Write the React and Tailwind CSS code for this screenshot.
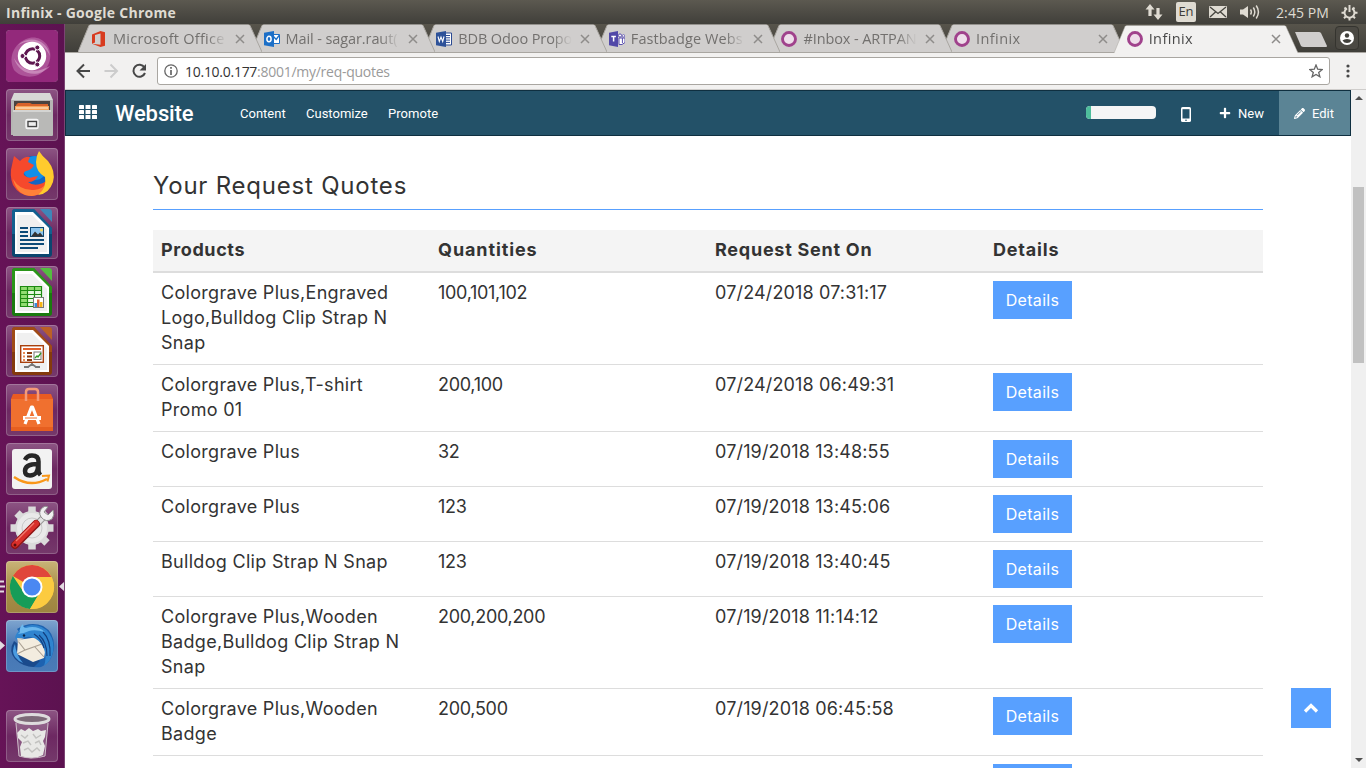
import React from "react";
import { FaPlus } from "react-icons/fa";
import { FaPencil } from "react-icons/fa6";

const ui = "font-['Open_Sans','Noto_Sans',sans-serif]";

function TabIcon({ kind }) {
  if (kind === "office")
    return (
      <svg width="16" height="16" viewBox="0 0 16 16">
        <path d="M1 3.5 9.5 0 14 1.3v13.4L9.5 16 1 12.7l8.5 1.1V2.6L4 4v7.6L1 12.7z" fill="#d83b1f" />
      </svg>
    );
  if (kind === "outlook")
    return (
      <svg width="16" height="16" viewBox="0 0 16 16">
        <path d="M8 3.5h7.5v9H8z" fill="#fff" stroke="#1c6fc7" />
        <path d="M9 5l3.2 3.5L15.5 4" fill="none" stroke="#1c6fc7" strokeWidth="1.4" />
        <path d="M0 1.8 10 0v16L0 14.2z" fill="#1c6fc7" />
        <ellipse cx="5" cy="8" rx="2.1" ry="2.7" fill="none" stroke="#fff" strokeWidth="1.5" />
      </svg>
    );
  if (kind === "word")
    return (
      <svg width="16" height="16" viewBox="0 0 16 16">
        <path d="M8 2h7.5v12H8z" fill="#fff" stroke="#2b4a92" />
        <path d="M9 4.5h5M9 6.8h5M9 9.1h5M9 11.4h5" stroke="#2b4a92" />
        <path d="M0 1.8 10 0v16L0 14.2z" fill="#2e5299" />
        <path d="M2 5.5l1.3 5L5 6l1.7 4.5L8 5.5" fill="none" stroke="#fff" strokeWidth="1.1" />
      </svg>
    );
  if (kind === "teams")
    return (
      <svg width="16" height="16" viewBox="0 0 16 16">
        <circle cx="11" cy="4.5" r="1.6" fill="#fff" stroke="#5b50b0" />
        <circle cx="14.5" cy="4.8" r="1.2" fill="#fff" stroke="#5b50b0" strokeWidth=".8" />
        <path d="M10 7h6v4.5l-3 2h-3z" fill="#fff" stroke="#5b50b0" />
        <path d="M13.4 7v5" stroke="#5b50b0" />
        <path d="M0 1.8 9 0v16L0 14.2z" fill="#5148a8" />
        <path d="M2.3 5.6h4.6M4.6 5.6v5" stroke="#fff" strokeWidth="1.5" />
      </svg>
    );
  return (
    <svg width="16" height="16" viewBox="0 0 16 16">
      <circle cx="8" cy="8" r="6.5" fill="#eedeea" stroke="#a0428c" strokeWidth="2.9" />
    </svg>
  );
}

function Tab({ kind, title, active, track }) {
  return (
    <div className="relative -mr-[11.4px] h-[28px] w-[184px] shrink-0">
      <svg className="absolute inset-0" width="184" height="28" viewBox="0 0 184 28">
        <path d="M0 28 L11 1.5 Q11.5 .5 13 .5 H170 Q171.5 .5 172 1.5 L184 28z" fill={active ? "#f2f1f0" : "#d0cecd"} />
        <path d="M0 28 L11 1.5 M172 1.5 L184 28" fill="none" stroke="#a9a6a1" strokeWidth={active ? 0.5 : 1} />
      </svg>
      <div className={"relative flex h-full items-center pl-[13px] " + (active ? "" : "pt-[2px]")}>
        <TabIcon kind={kind} />
        <span
          className={
            "ml-[6px] w-[115px] text-[14.5px] leading-[20px] whitespace-nowrap [mask-image:linear-gradient(to_right,black_82%,transparent_99%)] " +
            track + " " +
            (active ? "text-[#4a4a4a]" : "text-[#72706e]")
          }
        >
          {title}
        </span>
        <svg className="ml-[7px]" width="10" height="10" viewBox="0 0 10 10">
          <path d="M1 1l8 8M9 1L1 9" stroke="#8e8c8a" strokeWidth="1.5" />
        </svg>
      </div>
    </div>
  );
}

const tabs = [
  ["office", "Microsoft Office", "z-[7]", "tracking-[0.25px]"],
  ["outlook", "Mail - sagar.raut(", "z-[6]", "tracking-[-0.1px]"],
  ["word", "BDB Odoo Propo", "z-[5]", "tracking-[-0.1px]"],
  ["teams", "Fastbadge Webs", "z-[4]", "tracking-[0.1px]"],
  ["ring", "#Inbox - ARTPAN", "z-[3]", "tracking-[-0.1px]"],
  ["ring", "Infinix", "z-[2]", "tracking-[0.4px]"],
  ["ring", "Infinix", "z-[8]", "tracking-[0.4px]"],
];

function SystemBar() {
  return (
    <div className={"flex h-[24px] shrink-0 items-center bg-linear-to-b from-[#5c5950] to-[#403f3a] text-[#dfdbd2] " + ui}>
      <div className="pl-[6px] text-[14px] font-bold tracking-[0.28px]">Infinix - Google Chrome</div>
      <div className="ml-auto flex items-center">
        <svg width="18" height="18" viewBox="0 0 18 18" fill="#dfdbd2">
          <path d="M5 1 9.5 6.5H6.6V13H3.4V6.500H.5zM13 17 8.500 11.500h2.900V5h3.200v6.500h2.900z" />
        </svg>
        <div className="ml-[13px] flex h-[20px] w-[20px] items-center justify-center rounded-[2px] bg-[#dfdbd2] text-[13px] text-[#3d3c38]">En</div>
        <svg className="ml-[13px]" width="18" height="12" viewBox="0 0 18 12">
          <rect width="18" height="12" rx="1" fill="#dfdbd2" />
          <path d="M1 1l8 6.500L17 1M1 11l5.500-5M17 11l-5.500-5" fill="none" stroke="#45443e" strokeWidth="1.3" />
        </svg>
        <svg className="ml-[13px]" width="21" height="16" viewBox="0 0 21 16">
          <path d="M0 5.500h3L8 2v12l-5-3.500H0z" fill="#dfdbd2" />
          <path d="M10.500 5.500q1.700 2.500 0 5M13.300 3.500q3 4.500 0 9M16.200 1.500q4.500 6.500 0 13" fill="none" stroke="#dfdbd2" strokeWidth="1.5" />
        </svg>
        <div className="ml-[15px] w-[53px] text-[14px] whitespace-nowrap tracking-[0.1px]">2:45 PM</div>
        <svg className="mr-[8px] ml-[12px]" width="17" height="17" viewBox="0 0 17 17" fill="none" stroke="#dfdbd2">
          <path d="M6 4.300a5 5 0 1 0 5 0" strokeWidth="2" />
          <path d="M8.500 1v7" strokeWidth="2" />
          <path d="M3.500 3.500l1.500 1.500M13.500 3.500l-1.500 1.500M.5 8.700h2.500M14 8.700h2.500M3 14.200l1.700-1.700M14 14.200l-1.700-1.700M8.500 14v2.500" strokeWidth="2" />
        </svg>
      </div>
    </div>
  );
}

function Doc({ dark, mid, light, children }) {
  return (
    <>
      <path d="M7 2h21l18 19v26q0 3-3 3H9q-3 0-3-3V5q0-3 3-3z" fill={dark} />
      <path d="M6 5q0-3 3-3h19l18 19v6H6z" fill={mid} opacity=".55" />
      <path d="M9 5h18l16 16v26H9z" fill="#fff" />
      <path d="M11 8h15l15 15v22H11z" fill="#f0f0f0" />
      <path d="M34 2h9q3 0 3 3v10z" fill={light} />
      {children}
    </>
  );
}

const launcher = {
  ubuntu: (
    <>
      <rect width="52" height="52" rx="4" fill="#93297b" />
      <path d="M8 40C-2 20 20 2 34 9c16 8 12 30-2 36-10 4-20 0-24-5z" fill="#c77fb8" opacity=".5" />
      <path d="M12 15C24 4 42 10 44 26 38 12 24 8 12 15zM44 36C32 50 12 44 8 28 16 42 30 44 44 36z" fill="#e9c5e0" opacity=".45" />
      <circle cx="26" cy="26" r="14.200" fill="#fff" />
      <circle cx="26.500" cy="26" r="7.200" fill="none" stroke="#5e1750" strokeWidth="3" />
      <path d="M17 26h6M31 18l-3 5M31 34l-3-5" stroke="#fff" strokeWidth="1.300" />
      <g fill="#5e1750" stroke="#fff" strokeWidth="1">
        <circle cx="16.500" cy="26" r="2.500" /><circle cx="31.300" cy="17.500" r="2.500" /><circle cx="31.300" cy="34.500" r="2.500" />
      </g>
    </>
  ),
  files: (
    <>
      <path d="M8 4h36l3 7v10H5V11z" fill="#d8d8d6" />
      <path d="M5 11h42v35H5z" fill="#b6b6b4" />
      <path d="M8 12h36v12H8z" fill="#4a4340" />
      <path d="M10 16l2-2h12l2 1h16v9H10z" fill="#d8622a" />
      <path d="M9 17h34v6H9z" fill="#f6a35a" /><path d="M10 18.500h32v1H10z" fill="#fff3de" />
      <path d="M7 21h38l2 1v24q0 1-1 1H7z" fill="#b9b9b7" />
      <path d="M7 21h38v2H7z" fill="#d4d4d2" />
      <rect x="20" y="30.500" width="12" height="9" rx="1.500" fill="#ddd" stroke="#f5f5f5" strokeWidth="1.500" />
      <rect x="22" y="32.500" width="8.500" height="5" fill="#eee" stroke="#444" strokeWidth="1.300" />
    </>
  ),
  firefox: (
    <>
      <circle cx="27" cy="26" r="18" fill="#1265c4" />
      <circle cx="29" cy="20" r="12" fill="#118fe8" />
      <path d="M8 8l6 5q5-5 10-4l-2 5 6 3q-2 5-8 6-3 1-2 4 4 4 9 2l5-1q-3 6-10 6 6 5 15 1l6-4q-3 14-16 17Q14 49 7 37 3 27 6 17z" fill="#f6492c" />
      <path d="M7 31q7 12 21 11 9-1 14-8-3 13-16 14Q11 48 7 31z" fill="#ff8139" />
      <path d="M33 3q3 5 9 10 8 10 5 21-4 12-15 13 9-7 7-18-9-5-9-15 0-6 3-11z" fill="#ffcb2d" />
    </>
  ),
  writer: (
    <Doc dark="#0b466f" mid="#1c76ab" light="#3f86b8">
      <path d="M14 21h8M14 25h8M14 29h8M14 33h24M14 37h24M14 41h18" stroke="#0c4a77" strokeWidth="2" />
      <rect x="24.500" y="20.500" width="13" height="9" fill="#8ec6ef" stroke="#0c4a77" />
      <path d="M25 29.500l4-5 3 3 2-2 3.500 4z" fill="#333" /><circle cx="35.500" cy="23" r="1.500" fill="#f7d85c" />
    </Doc>
  ),
  calc: (
    <Doc dark="#1a7a0f" mid="#38ab22" light="#54bd40">
      <rect x="14" y="20" width="22" height="21" fill="#e6f7de" />
      <path d="M14 20h22v4H14zM14 24h7v17h-7z" fill="#92dc72" />
      <path d="M14.500 20.500h21v20h-21zM14 24.500h22M14 28.500h22M14 32.500h22M14 36.500h22M21.500 20v21M28.500 20v21" fill="none" stroke="#1d8a12" strokeWidth="1.200" />
      <rect x="27.500" y="31.500" width="10" height="10" fill="#fff" stroke="#777" />
      <path d="M28.500 37h2.500v4h-2.500z" fill="#3b8bd8" /><path d="M31 33.500h2.500V41H31z" fill="#e2602a" /><path d="M34 36h2.500v5H34z" fill="#f5b515" />
    </Doc>
  ),
  impress: (
    <Doc dark="#843a0d" mid="#b85a20" light="#bb6026">
      <rect x="14.700" y="20.700" width="22.600" height="16.600" fill="#fff" stroke="#a8400d" strokeWidth="1.400" />
      <path d="M17 24h18" stroke="#e2602a" strokeWidth="2" />
      <path d="M17 28h2M17 31.500h2M17 35h2" stroke="#e98a52" strokeWidth="2" /><path d="M21 28h5M21 31.500h5M21 35h5" stroke="#8d3c10" strokeWidth="1.800" />
      <rect x="28" y="27" width="7" height="7.500" fill="#fff" stroke="#777" /><path d="M29 33l2-2 1 1 3-4" fill="none" stroke="#2f9b24" strokeWidth="1.300" />
      <path d="M26 38v2M22 42l4-3 4 3M18 42h5M29 42h5" fill="none" stroke="#777" strokeWidth="1.800" />
    </Doc>
  ),
  software: (
    <>
      <path d="M7 10h38l2 5v32H5V15z" fill="#e95b22" />
      <path d="M5 15h42v32H5z" fill="#f0702f" /><path d="M5 43h42v4H5z" fill="#e65f20" />
      <path d="M20 17V8q0-3 3-3h6q3 0 3 3v9" fill="none" stroke="#f59a78" strokeWidth="2.500" />
      <path d="M19 40l6.500-17h1L33 40" fill="none" stroke="#fff" strokeWidth="3.200" strokeLinejoin="round" />
      <path d="M17 32h18v4H17z" fill="#fff" /><path d="M19 34h12" stroke="#f0702f" />
    </>
  ),
  amazon: (
    <>
      <rect x="6" y="6" width="40" height="40" rx="3" fill="#f2f2f2" />
      <path d="M19 17q2-4.500 7-4.500 6.500 0 6.500 6V28q0 2 2 4M32 21c-8 0-13 1.500-13 7 0 3 2 4.500 5 4.500 5 0 8-4 8-9" fill="none" stroke="#262626" strokeWidth="4.500" />
      <path d="M8 34q16 11 33 2" fill="none" stroke="#f9971a" strokeWidth="2.500" />
      <path d="M36 33l7-.500-1.500 6" fill="none" stroke="#f9971a" strokeWidth="2" />
    </>
  ),
  settings: (
    <>
      <circle cx="26" cy="26" r="17" fill="#dadada" />
      <path d="M26 4.500v43M4.500 26h43M11 11l30 30M41 11L11 41" stroke="#dadada" strokeWidth="7.500" />
      <circle cx="26" cy="26" r="15" fill="#e9e9e9" />
      <circle cx="26" cy="26" r="10" fill="none" stroke="#c9c9c9" />
      <path d="M29 24l9-9" stroke="#999" strokeWidth="6.500" /><path d="M29 24l10-10" stroke="#e2e2e2" strokeWidth="4.500" />
      <path d="M36 6q-4 4-1 9 5 6 11 2 3-4 1-9l-5 5-4-3 4-5q-3-2-6 1z" fill="#f0f0f0" stroke="#8f8f8f" />
      <path d="M9 43L30 22" stroke="#8c1414" strokeWidth="8" strokeLinecap="round" />
      <path d="M9 42.500L30 21.500" stroke="#d92f2a" strokeWidth="6" strokeLinecap="round" />
      <path d="M10 39L28 21" stroke="#f07b70" strokeWidth="1.300" /><circle cx="9" cy="43" r="1.500" fill="#5a0d0d" />
    </>
  ),
  chrome: (
    <>
      <circle cx="26" cy="26" r="22" fill="#fcca3f" />
      <path d="M26 26L6.900 15A22 22 0 0 1 45.500 16H26z" fill="#e0463b" />
      <path d="M6.900 15A22 22 0 0 0 24 48l10-17-8-5-8.500 5z" fill="#169c58" />
      <path d="M26 16h19.500A22 22 0 0 1 24 48l10.500-17z" fill="#fccb40" />
      <circle cx="26" cy="26" r="10.500" fill="#fff" /><circle cx="26" cy="26" r="8.600" fill="#4a88f2" />
    </>
  ),
  thunderbird: (
    <>
      <path d="M11 9Q24 1 37 6q11 6 11 20-1 16-13 21-6 1-12-1 8-3 10-8z" fill="#1d62b0" />
      <path d="M8 21q-6 10 1 18 8 8 19 8l6-6z" fill="#1a4a8c" />
      <path d="M12 20l20-3 8 9-2 12-11 4-16-8z" fill="#f3ecdf" />
      <path d="M12 21l7 9 17-6M11 34l8-4M38 37l-9-10" fill="none" stroke="#aaa093" strokeWidth="1.100" />
      <path d="M12 20q-5-1-1-7 5-7 15-8 11 0 17 8 6 9 4 19-2 9-9 14 3-9 0-17-4-10-13-12-6-1-13 3z" fill="#2f84cf" />
      <path d="M14 12q-1-5 3-8 0 4 3 4 11-3 19 4-10-3-16-1-6 3-11 3z" fill="#6db9ee" />
      <path d="M33 15q8 7 8 21M37 12q8 8 7 24M28 14q8 5 10 14" fill="none" stroke="#123f80" strokeWidth="1.200" />
      <path d="M9 24q-4 7 0 13 3 4 8 6-7-8-8-19z" fill="#4a9be0" />
      <circle cx="18" cy="15.500" r="1.200" fill="#0c2547" /><path d="M11 18l6 .5-5 3.500z" fill="#dbd5c7" />
    </>
  ),
  trash: (
    <>
      <path d="M9 10h34l-4 36q-13 4-26 0z" fill="#a98aa4" opacity=".45" />
      <path d="M11 23l4-4 4 2 4-3 4 3 5-2 3 2 5-1-1 7-2 4 2 5-2 9q-11 6-22 1l-1-9 2-5-4-4z" fill="#e8e8e6" />
      <path d="M15 25l4 3 3-3M27 24l3 4 5-3M17 33l5-2 3 4M29 33l4-2 2 4M18 40l4-2 4 4 5-4 3 3" fill="none" stroke="#c2c2c0" strokeWidth="1.400" />
      <path d="M10 13l3 33q13 4 26 0l3-33" fill="none" stroke="#cdbcc9" strokeWidth="1" />
      <ellipse cx="26" cy="9" rx="17" ry="4.500" fill="#7d6a78" stroke="#dedcdd" strokeWidth="3" />
    </>
  ),
};

const plain = "from-[#8d5584] via-[#6d2862] to-[#75396b]";
const apps = [
  ["ubuntu", plain], ["files", plain], ["firefox", plain], ["writer", plain], ["calc", plain], ["impress", plain],
  ["software", plain], ["amazon", plain], ["settings", plain],
  ["chrome", "from-[#c9b478] via-[#a98f48] to-[#9d8440]"],
  ["thunderbird", "from-[#7fa5cf] via-[#4676b4] to-[#4a7cb8]"],
];

function Tile({ name, tone }) {
  return (
    <div className={"h-[52px] w-[52px] overflow-hidden rounded-[4px] bg-linear-to-b shadow-[inset_0_0_0_1px_rgba(255,255,255,0.2)] " + tone}>
      <svg width="52" height="52" viewBox="0 0 52 52">{launcher[name]}</svg>
    </div>
  );
}

function Launcher() {
  return (
    <div className="relative flex w-[65px] shrink-0 flex-col gap-[7px] border-r border-[#7b4473] bg-[#601450] bg-linear-to-r from-[#661357] to-[#5c1250] pt-[6px] pl-[6px]">
      {apps.map(([n, t]) => <Tile key={n} name={n} tone={t} />)}
      <div className="mt-[31px]"><Tile name="trash" tone={plain} /></div>
      <svg className="absolute top-[554px] left-0" width="64" height="80" viewBox="0 0 64 80">
        <path d="M0 3.500h4M0 8.500h5M0 13.500h4" stroke="#e3dbe1" strokeWidth="2" />
        <path d="M64 4v9l-5-4.500zM0 63v9l5-4.500z" fill="#e3dbe1" />
      </svg>
    </div>
  );
}

function TabStrip() {
  return (
    <div className={"flex h-[29px] shrink-0 items-end border-b border-[#a9a6a1] bg-linear-to-b from-[#57544b] to-[#403f3a] pl-[13px] " + ui}>
      {tabs.map(([k, t, z, tr], i) => (
        <div key={i} className={"relative " + z + (i === 6 ? " -mb-px" : "")}>
          <Tab kind={k} title={t} active={i === 6} track={tr} />
        </div>
      ))}
      <svg className="mb-[4px] ml-[9px] shrink-0" width="33" height="17" viewBox="0 0 33 17">
        <path d="M0 1h24q1 0 2 1l6 13q0 1-1 1H9q-2 0-3-1z" fill="#d0cecd" />
      </svg>
      <div className="mb-[2px] ml-[7px] flex h-[24px] w-[24px] shrink-0 items-center justify-center rounded-[4px] border border-[#35342f] bg-[#4b4943]">
        <svg width="14" height="14" viewBox="0 0 14 14">
          <circle cx="7" cy="7" r="7" fill="#fff" /><circle cx="7" cy="4.500" r="2.200" fill="#42413c" />
          <path d="M2.500 9.500q1.500-1.500 4.500-1.500t4.500 1.500q-1.500 2.500-4.500 2.500T2.500 9.500z" fill="#42413c" />
        </svg>
      </div>
    </div>
  );
}

function Toolbar() {
  return (
    <div className={"flex h-[37px] shrink-0 items-center border-b border-[#cfcdcb] bg-[#f2f1f0] " + ui}>
      <svg className="ml-[11px]" width="72" height="16" viewBox="0 0 72 16" fill="none" strokeWidth="2">
        <path d="M14 8H1.500M8 1.500L1.500 8 8 14.500" stroke="#474747" />
        <path d="M28.500 8H41M34.500 1.500L41 8l-6.500 6.500" stroke="#ccc" />
        <path d="M68.500 4.500A6 6 0 1 0 69 10" stroke="#474747" />
        <path d="M70 1v6.500h-6.500z" fill="#474747" />
      </svg>
      <div className="ml-[9px] flex h-[28px] w-[1173px] items-center rounded-[3px] border border-[#a9a6a1] bg-white pr-[6px] pl-[6px]">
        <svg width="14" height="14" viewBox="0 0 14 14" fill="none" stroke="#666">
          <circle cx="7" cy="7" r="6.200" strokeWidth="1.300" /><path d="M7 6v5M7 3v1.700" strokeWidth="1.700" />
        </svg>
        <div className="ml-[7px] text-[14px] tracking-[-0.27px] whitespace-nowrap text-[#9a9a9a]"><span className="text-[#333]">10.10.0.177</span>:8001/my/req-quotes</div>
        <svg className="ml-auto" width="14" height="14" viewBox="0 0 14 14">
          <path d="M7 1l1.700 4.200 4.500.3-3.500 2.900 1.200 4.400L7 10.400l-3.900 2.400 1.200-4.400L.8 5.500l4.500-.3z" fill="none" stroke="#666" strokeWidth="1.300" />
        </svg>
      </div>
      <svg className="ml-[16px]" width="4" height="14" viewBox="0 0 4 14" fill="#474747">
        <circle cx="2" cy="2" r="1.600" /><circle cx="2" cy="7" r="1.600" /><circle cx="2" cy="12" r="1.600" />
      </svg>
    </div>
  );
}

function SiteNav() {
  return (
    <div className="flex h-[46px] items-center border border-[#0f2f40] bg-[#235168] font-[Roboto,sans-serif] text-[13px] text-white">
      <svg className="mb-[2px] ml-[13px]" width="18" height="14" viewBox="0 0 18 14" fill="#fff">
        {[0, 5, 10].map((y) => [0, 6.5, 13].map((x) => <rect key={x + "-" + y} x={x} y={y} width="5" height="4" rx=".6" />))}
      </svg>
      <div className="ml-[18px] w-[80px] text-[22px] font-medium tracking-[-0.1px]">Website</div>
      <div className="mt-px ml-[45px] w-[46px]">Content</div>
      <div className="mt-px ml-[20px] w-[62px]">Customize</div>
      <div className="mt-px ml-[20px] tracking-[0.06px]">Promote</div>
      <div className="mb-px ml-auto h-[13px] w-[70px] overflow-hidden rounded-[4px] bg-[#f5f5f5]">
        <div className="h-full w-[5px] bg-[#4dbd9b]" />
      </div>
      <svg className="mt-[2px] ml-[25px]" width="10" height="15" viewBox="0 0 10 15">
        <rect width="10" height="15" rx="1.600" fill="#fff" /><rect x="1.500" y="2.200" width="7" height="9.300" fill="#235168" />
        <circle cx="5" cy="13.200" r=".8" fill="#235168" />
      </svg>
      <FaPlus className="ml-[28px] size-[12px]" />
      <div className="mt-px ml-[7px] w-[26px]">New</div>
      <div className="ml-[15px] flex h-[44px] w-[71px] items-center bg-[#5b8495] pl-[15px]">
        <FaPencil className="size-[11px]" />
        <div className="mt-px ml-[7px]">Edit</div>
      </div>
    </div>
  );
}

const rows = [
  [["Colorgrave Plus,Engraved", "Logo,Bulldog Clip Strap N", "Snap"], "100,101,102", "07/24/2018 07:31:17"],
  [["Colorgrave Plus,T-shirt", "Promo 01"], "200,100", "07/24/2018 06:49:31"],
  [["Colorgrave Plus"], "32", "07/19/2018 13:48:55"],
  [["Colorgrave Plus"], "123", "07/19/2018 13:45:06"],
  [["Bulldog Clip Strap N Snap"], "123", "07/19/2018 13:40:45"],
  [["Colorgrave Plus,Wooden", "Badge,Bulldog Clip Strap N", "Snap"], "200,200,200", "07/19/2018 11:14:12"],
  [["Colorgrave Plus,Wooden", "Badge"], "200,500", "07/19/2018 06:45:58"],
  [[""], "", ""],
];

function Quotes() {
  return (
    <div className="ml-[88px] w-[1110px] font-[Inter,sans-serif] text-[#333]">
      <h1 className="mt-[32px] h-[42px] border-b border-[#58a0ff] text-[24px] leading-[36px] tracking-[0.78px]">Your Request Quotes</h1>
      <div className="mt-[20px] grid h-[43px] grid-cols-[277px_277px_278px_278px] border-b-2 border-[#ddd] bg-[#f4f4f4] px-[8px] text-[18px] leading-[40px] font-bold">
        <div className="tracking-[0.6px]">Products</div>
        <div className="tracking-[0.9px]">Quantities</div>
        <div className="tracking-[0.75px]">Request Sent On</div>
        <div className="tracking-[0.8px]">Details</div>
      </div>
      {rows.map(([p, q, d], i) => (
        <div key={i} className={"grid grid-cols-[277px_277px_278px_278px] px-[8px] text-[18px] leading-[25px] whitespace-nowrap " + (i ? "border-t border-[#ddd]" : "")}>
          <div className="pt-[7px] pb-[9px] tracking-[0.3px]">{p.map((l) => <div key={l}>{l}</div>)}</div>
          <div className="pt-[7px] tracking-[-0.3px]">{q}</div>
          <div className="pt-[7px] tracking-[0.15px]">{d}</div>
          <div className="py-[8px]">
            <button className="block h-[38px] w-[79px] bg-[#58a0ff] text-[16px] leading-[37px] tracking-[0.3px] text-white">Details</button>
          </div>
        </div>
      ))}
    </div>
  );
}

export default function App() {
  return (
    <div className="flex h-[768px] w-[1366px] flex-col overflow-hidden bg-white">
      <SystemBar />
      <div className="flex min-h-0 flex-1">
        <Launcher />
        <div className="flex min-w-0 flex-1 flex-col">
          <TabStrip />
          <Toolbar />
          <div className="flex min-h-0 flex-1">
            <div className="relative w-[1286px] overflow-hidden">
              <SiteNav />
              <Quotes />
              <div className="absolute right-[20px] bottom-[40px] flex h-[40px] w-[40px] items-center justify-center bg-[#58a0ff]">
                <svg width="16" height="12" viewBox="0 0 16 12"><path d="M2 9.500L8 3.500 14 9.500" fill="none" stroke="#fff" strokeWidth="3.200" /></svg>
              </div>
            </div>
            <div className="flex w-[15px] flex-col items-center bg-[#f0f0f0]">
              <svg className="mt-[6px]" width="8" height="4" viewBox="0 0 8 4"><path d="M4 0l4 4H0z" fill="#505050" /></svg>
              <div className="mt-[87px] h-[176px] w-[11px] bg-[#c1c1c1]" />
              <svg className="mt-auto mb-[6px]" width="8" height="4" viewBox="0 0 8 4"><path d="M4 4l4-4H0z" fill="#505050" /></svg>
            </div>
          </div>
        </div>
      </div>
    </div>
  );
}
